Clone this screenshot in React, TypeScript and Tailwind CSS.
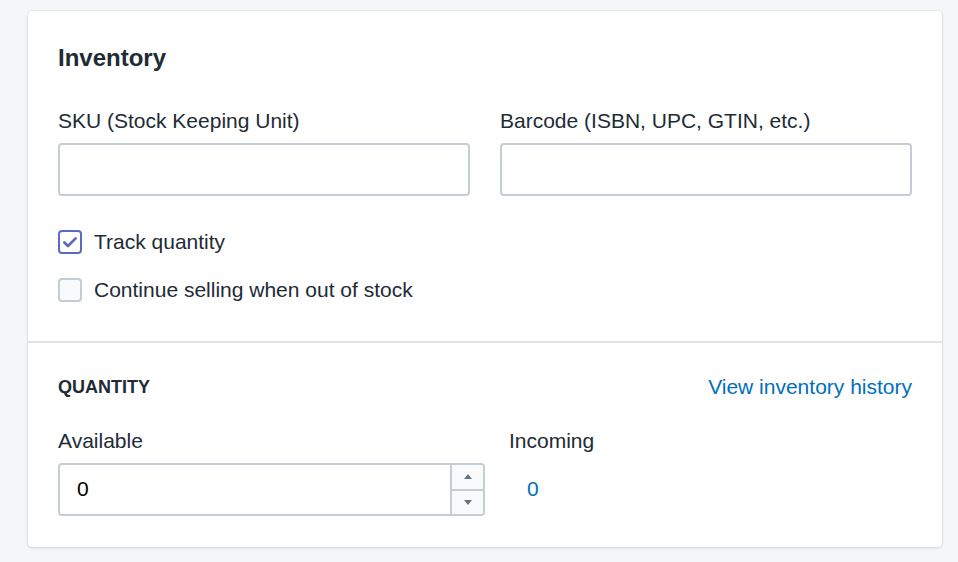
import React from "react";

function Checkbox({ checked, label }: { checked?: boolean; label: string }) {
  return (
    <label className="flex h-[30px] items-center gap-[12px]">
      <span
        className={
          checked
            ? "flex h-[24px] w-[24px] items-center justify-center rounded-[4px] border-2 border-[#5c6ac4] bg-white"
            : "flex h-[24px] w-[24px] items-center justify-center rounded-[4px] border-2 border-[#c4cdd5] bg-[#f9fafb]"
        }
      >
        {checked && (
          <svg viewBox="0 0 16 16" className="h-[18px] w-[18px]" fill="none">
            <path d="M3 8.4l3.2 3.2L13 4.8" stroke="#5c6ac4" strokeWidth="2.4" strokeLinecap="round" strokeLinejoin="round" />
          </svg>
        )}
      </span>
      <span>{label}</span>
    </label>
  );
}

function TextField({ label }: { label: string }) {
  return (
    <div className="flex flex-col">
      <span className="mb-[7px] leading-[30px]">{label}</span>
      <div className="h-[53px] rounded-[4px] border-2 border-[#c4cdd5] bg-white" />
    </div>
  );
}

export default function App() {
  return (
    <div
      className="min-h-[562px] bg-[#f4f6f8] px-[28px] pt-[11px] pb-[15px] text-[21px] text-[#212b36]"
      style={{ fontFamily: '"Liberation Sans", Arial, sans-serif' }}
    >
      <div className="w-[914px] rounded-[4px] bg-white shadow-[0_0_0_1px_rgba(63,63,68,0.06),0_1px_3px_0_rgba(63,63,68,0.15)]">
        <section className="px-[30px] pt-[31px] pb-[36px]">
          <h2 className="text-[24px] leading-[32px] font-bold">Inventory</h2>
          <div className="mt-[32px] grid grid-cols-2 gap-[30px]">
            <TextField label="SKU (Stock Keeping Unit)" />
            <TextField label="Barcode (ISBN, UPC, GTIN, etc.)" />
          </div>
          <div className="mt-[31px] flex flex-col gap-[18px]">
            <Checkbox checked label="Track quantity" />
            <Checkbox label="Continue selling when out of stock" />
          </div>
        </section>
        <section className="border-t-2 border-[#dfe3e8] px-[30px] pt-[29px] pb-[31px]">
          <div className="flex h-[30px] items-center justify-between">
            <h3 className="text-[18px] font-bold uppercase">Quantity</h3>
            <a href="#history" className="text-[#006fbb]">
              View inventory history
            </a>
          </div>
          <div className="mt-[24px] grid grid-cols-[427px_1fr] gap-[24px]">
            <div className="flex flex-col">
              <span className="mb-[7px] leading-[30px]">Available</span>
              <div className="flex h-[53px] overflow-hidden rounded-[4px] border-2 border-[#c4cdd5] bg-white">
                <span className="flex flex-1 items-center pb-[1px] pl-[17px] text-black">0</span>
                <div className="flex w-[33px] flex-col border-l-2 border-[#c4cdd5] bg-[#f9fafb]">
                  <span className="flex flex-1 items-center justify-center border-b-2 border-[#c4cdd5]">
                    <span className="h-0 w-0 border-x-[4px] border-b-[5px] border-x-transparent border-b-[#637381]" />
                  </span>
                  <span className="flex flex-1 items-center justify-center">
                    <span className="h-0 w-0 border-x-[4px] border-t-[5px] border-x-transparent border-t-[#637381]" />
                  </span>
                </div>
              </div>
            </div>
            <div className="flex flex-col">
              <span className="mb-[7px] leading-[30px]">Incoming</span>
              <span className="flex h-[53px] items-center pb-[1px] pl-[18px] text-[#006fbb]">0</span>
            </div>
          </div>
        </section>
      </div>
    </div>
  );
}
